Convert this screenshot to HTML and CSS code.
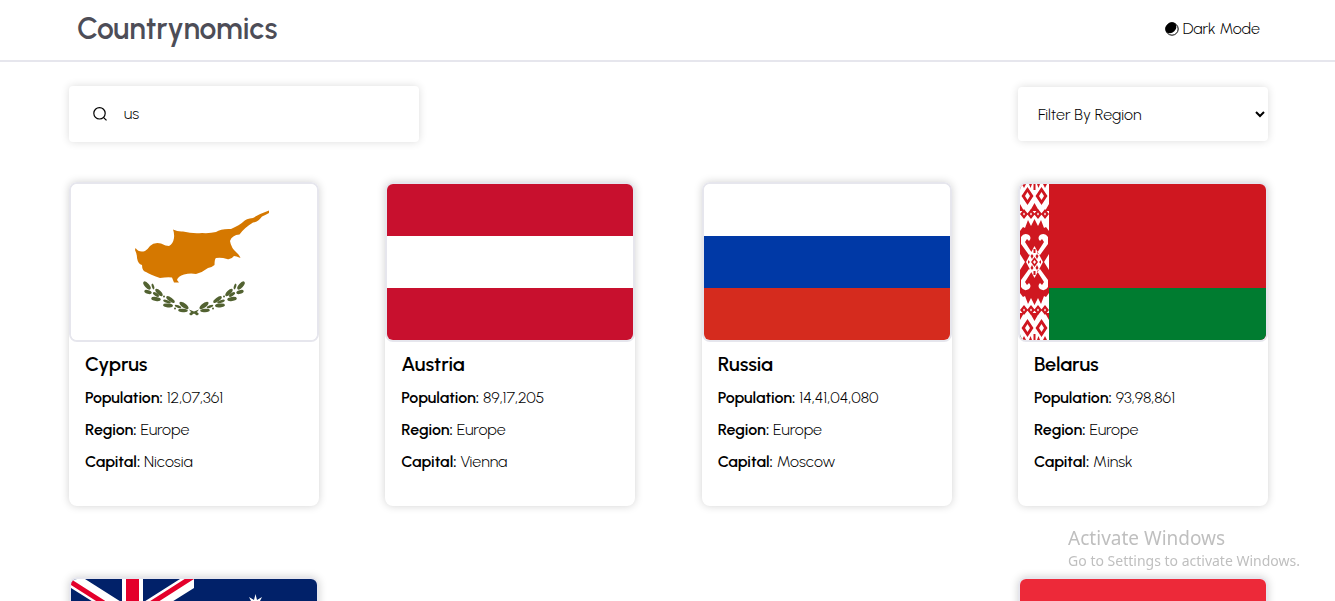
FILE: index.html
```html
<!DOCTYPE html>
<html lang="en">
<head>
<meta charset="utf-8">
<meta name="viewport" content="width=device-width, initial-scale=1">
<title>Countrynomics</title>
<link rel="stylesheet" href="styles.css">
</head>
<body>
<header class="header">
  <h1 class="brand">Countrynomics</h1>
  <button class="mode" type="button">
    <svg class="mode-icon" viewBox="0 0 14 14" aria-hidden="true">
      <circle cx="7" cy="7" r="6.2" fill="#fff" stroke="#000" stroke-width="1"/>
      <path d="M10.300 1.400A6.500 6.500 0 0 0 1.400 10.300A6.500 6.500 0 0 0 10.300 1.400Z"/>
    </svg>
    <span>Dark Mode</span>
  </button>
</header>
<main class="page">
  <form class="tools">
    <div class="search">
      <label for="search" aria-label="Search countries">
        <svg class="search-icon" viewBox="0 0 14 14" fill="none" stroke="#000" stroke-width="1.2" aria-hidden="true">
          <circle cx="6.500" cy="6.300" r="5.700"/><path d="M10.400 10.300 13.500 13.400"/>
        </svg>
      </label>
      <input class="search-input" id="search" type="text" value="us">
    </div>
    <select class="region" aria-label="Filter by region">
      <option>Filter By Region</option>
      <option>Africa</option>
      <option>America</option>
      <option>Asia</option>
      <option>Europe</option>
      <option>Oceania</option>
    </select>
  </form>
  <section class="cards">
    <article class="card">
      <svg class="flag" viewBox="0 0 246 156" preserveAspectRatio="none" role="img" aria-label="Flag of Cyprus">
        <rect width="246" height="156" fill="#fff"/>
        <path fill="#d57800" d="M64.500 64Q68 69 74 67Q77 65 79 62Q83 58 90 59.500Q95 62 98 62Q102 60 103 54Q103.500 49 102 45.500Q107 48 112 47.500Q122 50 131 49Q139 49.500 145 48Q150 44.500 160 45Q169 41 172 38Q175 34.500 182 34Q188 30 198 26.500V29Q194 31 191 32.500Q187 38 182 38.500Q173 44 168.500 50.500Q161 51 159 57Q160 64 166 69Q169 72 169.500 74Q165 72 163 72Q160 76 156 75Q150 73 145 74Q143.500 75 143.500 81Q140 84 137 84Q132 88 125 90Q119 89 113 90.500Q107 92 106 96L108 98.500H103L101 93.500Q96 93 89 94Q80 91 75 88Q71 87 71 81Q67 80 66 74Q66 70 64 66Z"/>
        <defs>
          <g id="branch" fill="#526231">
            <ellipse cx="76" cy="101.500" rx="5" ry="2.200" transform="rotate(48 76 101.500)"/>
            <ellipse cx="82" cy="102.500" rx="3" ry="1.200" transform="rotate(72 82 102.500)"/>
            <ellipse cx="77" cy="108" rx="3.800" ry="1.800" transform="rotate(16 77 108)"/>
            <ellipse cx="88" cy="108.500" rx="4.800" ry="2" transform="rotate(46 88 108.500)"/>
            <ellipse cx="85" cy="115" rx="4.800" ry="2" transform="rotate(8 85 115)"/>
            <ellipse cx="85" cy="110.500" rx="3.600" ry="1.500" transform="rotate(36 85 110.500)"/>
            <ellipse cx="99.500" cy="115.500" rx="5" ry="2" transform="rotate(36 99.500 115.500)"/>
            <ellipse cx="97" cy="121.500" rx="5" ry="1.900" transform="rotate(6 97 121.500)"/>
            <ellipse cx="96" cy="117.500" rx="4" ry="1.400" transform="rotate(20 96 117.500)"/>
            <ellipse cx="113" cy="121.500" rx="5.400" ry="2.300" transform="rotate(36 113 121.500)"/>
            <ellipse cx="112" cy="126.500" rx="4.800" ry="1.700" transform="rotate(4 112 126.500)"/>
            <ellipse cx="107" cy="122.500" rx="3.500" ry="1.200" transform="rotate(20 107 122.500)"/>
            <circle cx="93" cy="112.500" r="1"/><circle cx="104" cy="124.500" r="1"/>
            <path d="M118 125.500 123 127.500V129.500L120 131.500 118 130 120 128Z"/>
          </g>
        </defs>
        <use href="#branch"/>
        <use href="#branch" transform="translate(246 0) scale(-1 1)"/>
      </svg>
      <div class="info">
        <h2 class="name">Cyprus</h2>
        <p><b>Population:</b> 12,07,361</p>
        <p><b>Region:</b> Europe</p>
        <p><b>Capital:</b> Nicosia</p>
      </div>
    </article>
    <article class="card">
      <svg class="flag" viewBox="0 0 3 3" preserveAspectRatio="none" role="img" aria-label="Flag of Austria">
        <rect width="3" height="3" fill="#c8102e"/><rect y="1" width="3" height="1" fill="#fff"/>
      </svg>
      <div class="info">
        <h2 class="name">Austria</h2>
        <p><b>Population:</b> 89,17,205</p>
        <p><b>Region:</b> Europe</p>
        <p><b>Capital:</b> Vienna</p>
      </div>
    </article>
    <article class="card">
      <svg class="flag" viewBox="0 0 3 3" preserveAspectRatio="none" role="img" aria-label="Flag of Russia">
        <rect width="3" height="3" fill="#fff"/><rect y="1" width="3" height="1" fill="#0039a6"/><rect y="2" width="3" height="1" fill="#d52b1e"/>
      </svg>
      <div class="info">
        <h2 class="name">Russia</h2>
        <p><b>Population:</b> 14,41,04,080</p>
        <p><b>Region:</b> Europe</p>
        <p><b>Capital:</b> Moscow</p>
      </div>
    </article>
    <article class="card">
      <svg class="flag" viewBox="0 0 246 156" preserveAspectRatio="none" role="img" aria-label="Flag of Belarus">
        <rect width="246" height="156" fill="#cf1720"/><rect y="104" width="246" height="52" fill="#007c30"/>
        <rect width="29" height="156" fill="#fff"/>
        <defs>
          <g id="ornament">
            <path fill="#cf1720" d="M7.500 3 13.500 12 7.500 21 1.500 12ZM21.500 3 27.500 12 21.500 21 15.500 12ZM2 0H6L4 4ZM9 0H12L10.500 4ZM17 0H20L18.500 4ZM23 0H27L25 4ZM13.500 0H15.500V6H13.500ZM0 20 4 27H0ZM29 20 25 27H29ZM14.500 19 19 27H10ZM0 47 3 43 5 44 8 36 11 42 14.500 35 18 42 21 36 24 44 26 43 29 47V78H0Z"/>
            <path fill="#cf1720" d="M0 30 4 25 8 30 4 35ZM7 30 11 25 15 30 11 35ZM14 30 18 25 22 30 18 35ZM21 30 25 25 29 30 25 35Z"/>
            <path fill="#fff" d="M7.500 8 10 12 7.500 16 5 12ZM21.500 8 24 12 21.500 16 19 12ZM3 30 4 28.500 5 30 4 31.500ZM10 30 11 28.500 12 30 11 31.500ZM17 30 18 28.500 19 30 18 31.500ZM24 30 25 28.500 26 30 25 31.500Z"/>
            <path fill="#fff" d="M1 53Q4 48 9 51Q12 54 9 57L7 55 5 58 12 69 9 71 1 60ZM28 53Q25 48 20 51Q17 54 20 57L22 55 24 58 17 69 20 71 28 60ZM14.500 62 23 78H6ZM0 70 5 78H0ZM29 70 24 78H29Z"/>
            <path fill="#cf1720" d="M13.500 65H15.500V69H13.500ZM10.500 72 12 70 13.500 72 12 75ZM15.500 72 17 70 18.500 72 17 75ZM14.500 73 18 78H11ZM8 76 10 78H8ZM21 76 19 78H21Z"/>
            <path fill="#fff" d="M14.500 76 16 78H13Z"/>
          </g>
        </defs>
        <use href="#ornament"/>
        <use href="#ornament" transform="translate(0 156) scale(1 -1)"/>
      </svg>
      <div class="info">
        <h2 class="name">Belarus</h2>
        <p><b>Population:</b> 93,98,861</p>
        <p><b>Region:</b> Europe</p>
        <p><b>Capital:</b> Minsk</p>
      </div>
    </article>
    <article class="card">
      <svg class="flag" viewBox="0 0 246 156" preserveAspectRatio="none" role="img" aria-label="Flag of Australia">
        <rect width="246" height="156" fill="#012169"/>
        <svg width="123" height="78">
          <path d="M0 0 123 78M123 0 0 78" stroke="#fff" stroke-width="15"/>
          <path d="M0 3 61 42M123 -3 62 36" stroke="#e4002b" stroke-width="5"/>
          <path d="M61.500 0V78M0 39H123" stroke="#fff" stroke-width="21"/>
          <path d="M61.500 0V78M0 39H123" stroke="#e4002b" stroke-width="13"/>
        </svg>
        <path fill="#fff" d="M184.500 15 186 21 191 18 188 24 194 27H175L181 24 178 18 183 21Z"/>
      </svg>
    </article>
    <article class="card card-last">
      <svg class="flag" viewBox="0 0 246 156" preserveAspectRatio="none" role="img" aria-label="Flag of Singapore">
        <rect width="246" height="156" fill="#fff"/><rect width="246" height="78" fill="#ed2939"/>
      </svg>
    </article>
  </section>
</main>
<aside class="activate">
  <p class="activate-title">Activate Windows</p>
  <p class="activate-text">Go to Settings to activate Windows.</p>
</aside>
</body>
</html>
```
FILE: styles.css
```css
* { box-sizing: border-box; }
html { height: 100%; }
body {
  margin: 0;
  height: 100%;
  overflow: hidden;
  background: #fff;
  color: #000;
  font: 300 16px/20px Urbanist, Lato, sans-serif;
}
h1, h2, p { margin: 0; }
.header {
  display: flex;
  align-items: center;
  justify-content: space-between;
  height: 62px;
  padding: 0 75px 2px 77px;
  border-bottom: 2px solid #e6e6ed;
}
.brand { color: #4d4d57; font-size: 30px; line-height: 40px; font-weight: 600; }
.mode {
  display: flex;
  align-items: center;
  gap: 4px;
  padding: 0;
  border: 0;
  background: none;
  color: inherit;
  font: inherit;
}
.mode-icon, .search-icon { display: block; width: 14px; height: 14px; }
.page { padding: 24px 67px 0 69px; }
.tools { display: flex; align-items: center; justify-content: space-between; }
.search {
  display: flex;
  align-items: center;
  gap: 17px;
  width: 350px;
  height: 56px;
  padding: 0 24px;
  border-radius: 4px;
  box-shadow: 0 0 8px rgba(0, 0, 0, 0.14);
}
.search-input {
  flex: 1;
  min-width: 0;
  padding: 0;
  border: 0;
  outline: 0;
  background: none;
  color: inherit;
  font: inherit;
}
.region {
  width: 250px;
  height: 54px;
  padding: 0 0 0 16px;
  border: 0;
  border-radius: 4px;
  background: #fff;
  color: inherit;
  font: inherit;
  box-shadow: 0 0 8px rgba(0, 0, 0, 0.14);
}
.cards {
  display: grid;
  grid-template-columns: repeat(auto-fill, 250px);
  justify-content: space-between;
  row-gap: 71px;
  margin-top: 40px;
}
.card {
  min-height: 324px;
  border-radius: 8px;
  background: #fff;
  box-shadow: 0 0 8px rgba(0, 0, 0, 0.18);
}
.card-last { grid-column: -2; }
.flag {
  display: block;
  width: 100%;
  height: 160px;
  border: 2px solid #e6e6ed;
  border-radius: 8px;
}
.info { display: grid; gap: 12px; padding: 10px 16px; }
.name { font-size: 20px; line-height: 24px; font-weight: 600; }
.info b { font-weight: 600; }
.activate {
  position: fixed;
  right: 35px;
  bottom: 30px;
  color: #bfbfbf;
  font: 400 14px/20px "Noto Sans", sans-serif;
}
.activate-title { font-size: 19px; line-height: 25px; }
```
